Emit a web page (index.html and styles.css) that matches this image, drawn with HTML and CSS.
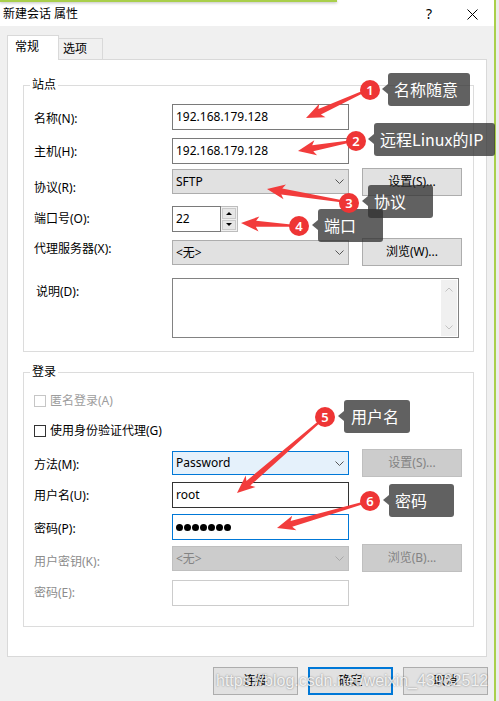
FILE: index.html
```html
<!DOCTYPE html>
<html lang="zh-CN">
<head>
<meta charset="utf-8">
<title>新建会话 属性</title>
<link rel="stylesheet" href="styles.css">
</head>
<body>
<div class="screen">
  <div class="dialog">
    <div class="titlebar">
      <span class="title">新建会话 属性</span>
      <span class="help">?</span>
      <svg class="close" width="11" height="11" viewBox="0 0 11 11"><path d="M0.5 0.5 L10.5 10.5 M10.5 0.5 L0.5 10.5" stroke="#000" stroke-width="1" fill="none"/></svg>
    </div>

    <div class="tabs">
      <div class="tab active">常规</div>
      <div class="tab">选项</div>
    </div>

    <div class="panel">
      <div class="group site">
        <div class="group-title">站点</div>

        <div class="row mt11">
          <span class="lbl t7">名称(N):</span>
          <div class="field">192.168.179.128</div>
        </div>
        <div class="row mt8">
          <span class="lbl t6">主机(H):</span>
          <div class="field">192.168.179.128</div>
        </div>
        <div class="row mt4">
          <span class="lbl t12">协议(R):</span>
          <div class="select mt1">SFTP<svg class="chev" width="9" height="5" viewBox="0 0 9 5"><path d="M0.5 0.5 L4.5 4.5 L8.5 0.5" fill="none" stroke="#555" stroke-width="1"/></svg></div>
          <button class="btn">设置(S)...</button>
        </div>
        <div class="row mt10">
          <span class="lbl t5">端口号(O):</span>
          <div class="spin">
            <div class="spin-input">22</div>
            <div class="spin-btns"><span class="spin-b up"></span><span class="spin-b down"></span></div>
          </div>
        </div>
        <div class="row mt6">
          <span class="lbl t3">代理服务器(X):</span>
          <div class="select mt2">&lt;无&gt;<svg class="chev" width="9" height="5" viewBox="0 0 9 5"><path d="M0.5 0.5 L4.5 4.5 L8.5 0.5" fill="none" stroke="#555" stroke-width="1"/></svg></div>
          <button class="btn">浏览(W)...</button>
        </div>
        <div class="row mt12">
          <span class="lbl t6 ml2">说明(D):</span>
          <div class="memo">
            <div class="memo-bar">
              <svg width="8" height="5" viewBox="0 0 8 5"><path d="M0.5 4.5 L4 1 L7.5 4.5" fill="none" stroke="#c2c2c2" stroke-width="1"/></svg>
              <svg width="8" height="5" viewBox="0 0 8 5"><path d="M0.5 0.5 L4 4 L7.5 0.5" fill="none" stroke="#c2c2c2" stroke-width="1"/></svg>
            </div>
          </div>
        </div>
      </div>

      <div class="group login">
        <div class="group-title">登录</div>

        <div class="check disabled mt13"><span class="box"></span>匿名登录(A)</div>
        <div class="check mt14"><span class="box"></span>使用身份验证代理(G)</div>

        <div class="row mt10">
          <span class="lbl t8">方法(M):</span>
          <div class="select active-sel mt2">Password<svg class="chev" width="9" height="5" viewBox="0 0 9 5"><path d="M0.5 0.5 L4.5 4.5 L8.5 0.5" fill="none" stroke="#555" stroke-width="1"/></svg></div>
          <button class="btn disabled">设置(S)...</button>
        </div>
        <div class="row mt5">
          <span class="lbl t6">用户名(U):</span>
          <div class="field hover">root</div>
        </div>
        <div class="row mt6">
          <span class="lbl t7">密码(P):</span>
          <div class="field focus"><span class="dots"><i></i><i></i><i></i><i></i><i></i><i></i><i></i></span></div>
        </div>
        <div class="row mt4">
          <span class="lbl t10 dim">用户密钥(K):</span>
          <div class="select disabled mt2">&lt;无&gt;<svg class="chev" width="9" height="5" viewBox="0 0 9 5"><path d="M0.5 0.5 L4.5 4.5 L8.5 0.5" fill="none" stroke="#a8a8a8" stroke-width="1"/></svg></div>
          <button class="btn disabled">浏览(B)...</button>
        </div>
        <div class="row mt8">
          <span class="lbl t5 dim">密码(E):</span>
          <div class="field disabled"></div>
        </div>
      </div>
    </div>

    <div class="footer">
      <button class="fbtn">连接</button>
      <button class="fbtn default">确定</button>
      <button class="fbtn">取消</button>
    </div>
  </div>
  <div class="edge"></div>
  <div class="outside"></div>

  <div class="topline"></div>
  <div class="watermark">https://blog.csdn.net/weixin_43932512</div>

  <div class="annot">
    <svg class="arrows" width="499" height="701" viewBox="0 0 499 701">
      <g fill="#f23c3c">
        <polygon transform="translate(306 118) rotate(-24.6)" points="0,0 18,-7.5 15,-3 61,-1.2 61,1.2 15,3 18,7.5"/>
        <polygon transform="translate(298 151) rotate(-10.4)" points="0,0 18,-7.5 15,-3 52,-1.2 52,1.2 15,3 18,7.5"/>
        <polygon transform="translate(267 189) rotate(9.35)" points="0,0 18,-7.5 15,-3 75,-1.2 75,1.2 15,3 18,7.5"/>
        <polygon transform="translate(241 223) rotate(3)" points="0,0 18,-7.5 15,-3 50,-1.2 50,1.2 15,3 18,7.5"/>
        <polygon transform="translate(237 493) rotate(-40.8)" points="0,0 18,-7.5 15,-3 108,-1.2 108,1.2 15,3 18,7.5"/>
        <polygon transform="translate(277 528) rotate(-16.2)" points="0,0 18,-7.5 15,-3 89,-1.2 89,1.2 15,3 18,7.5"/>
      </g>
    </svg>
    <div class="callout c1">名称随意</div>
    <div class="callout c2">远程Linux的IP</div>
    <div class="callout c3">协议</div>
    <div class="callout c4">端口</div>
    <div class="callout c5">用户名</div>
    <div class="callout c6">密码</div>
    <div class="badge b1">1</div>
    <div class="badge b2">2</div>
    <div class="badge b3">3</div>
    <div class="badge b4">4</div>
    <div class="badge b5">5</div>
    <div class="badge b6">6</div>
  </div>
</div>
</body>
</html>
```

FILE: styles.css
```css
* { box-sizing: border-box; }
html, body { margin: 0; padding: 0; }
body {
  width: 499px; height: 701px; overflow: hidden;
  background: #f0f0f0;
  font-family: "Noto Sans", "Noto Sans CJK SC", sans-serif;
  font-size: 12px; line-height: 16px; color: #000;
}
.screen { position: relative; display: flex; width: 499px; height: 701px; }
.dialog { width: 494px; flex: none; display: flex; flex-direction: column; background: #f0f0f0; }
.edge { width: 2px; flex: none; background: #a9cf4b; }
.outside { flex: 1; background: #ececec; }
.topline {
  position: absolute; z-index: 5; left: 0; top: 0; width: 337px; height: 2px;
  background: #a9cf4b; box-shadow: 0 1px 3px rgba(0,0,0,.3);
}

/* title bar */
.titlebar {
  height: 26px; flex: none; background: #fff;
  display: flex; align-items: center; padding: 2px 16px 0 3px;
}
.title { flex: 1; }
.help { font-size: 14px; margin-right: 35px; }
.close { display: block; }

/* tabs */
.tabs {
  position: relative; z-index: 2;
  display: flex; align-items: flex-end;
  height: 25px; margin: 9px 0 0 7px;
}
.tab {
  width: 44px; height: 21px; margin-bottom: 1px;
  padding: 2px 0 0 4px;
  background: #f0f0f0;
  border: 1px solid #d9d9d9; border-left: none; border-bottom: none;
}
.tab.active {
  width: 52px; height: 25px; margin-bottom: 0;
  padding: 3px 0 0 7px;
  background: #fff; border-left: 1px solid #d9d9d9;
}

/* panel */
.panel {
  position: relative; z-index: 1;
  margin: -1px 0 0 7px; width: 480px; height: 598px;
  background: #fff; border: 1px solid #d9d9d9;
  padding: 25px 0 0 15px;
}
.group { width: 451px; border: 1px solid #dcdcdc; padding: 0 0 0 10px; }
.group.site { height: 267px; }
.group.login { height: 255px; margin-top: 20px; }
.group-title {
  width: max-content; margin: -9px 0 0 -4px; padding: 0 2px;
  background: #fff; line-height: 16px;
}

/* rows */
.row {
  display: grid;
  grid-template-columns: 125px 177px 100px;
  column-gap: 13px;
  align-items: start;
}
.lbl { display: block; white-space: nowrap; line-height: 16px; }
.lbl.dim { color: #8c8c8c; }
.ml2 { margin-left: 2px; }

.mt1 { margin-top: 1px; } .mt2 { margin-top: 2px; } .mt4 { margin-top: 4px; }
.mt5 { margin-top: 5px; } .mt6 { margin-top: 6px; } .mt8 { margin-top: 8px; }
.mt10 { margin-top: 10px; } .mt11 { margin-top: 11px; } .mt12 { margin-top: 12px; }
.mt13 { margin-top: 13px; } .mt14 { margin-top: 14px; }
.t3 { margin-top: 3px; } .t5 { margin-top: 5px; } .t6 { margin-top: 6px; }
.t7 { margin-top: 7px; } .t8 { margin-top: 8px; } .t10 { margin-top: 10px; }
.t12 { margin-top: 12px; }

.field {
  height: 26px; border: 1px solid #7a7a7a; background: #fff;
  display: flex; align-items: center; padding: 0 3px;
}
.field.hover { border-color: #333; }
.field.focus { border-color: #0078d7; }
.field.disabled { border-color: #cccccc; }

.dots { display: flex; gap: 1px; }
.dots i { display: block; width: 7px; height: 7px; border-radius: 50%; background: #000; }

.select {
  height: 25px; border: 1px solid #adadad; background: #e1e1e1;
  display: flex; align-items: center; justify-content: space-between;
  padding: 0 4px 0 3px;
}
.select.active-sel { height: 24px; background: #e5f1fb; border-color: #0078d7; }
.select.disabled { background: #cccccc; border-color: #bfbfbf; color: #838383; }
.chev { display: block; }

.btn {
  width: 100px; height: 28px; padding: 0;
  background: #e1e1e1; border: 1px solid #adadad;
  font: inherit; color: #000;
}
.btn.disabled { background: #cccccc; border-color: #bfbfbf; color: #838383; }

/* spinner */
.spin { display: flex; height: 26px; }
.spin-input {
  width: 49px; height: 26px; border: 1px solid #7a7a7a; background: #fff;
  display: flex; align-items: center; padding: 0 3px;
}
.spin-btns {
  width: 17px; height: 26px; border: 1px solid #bdbdbd; border-left: none;
  background: #f0f0f0; padding: 1px;
  display: flex; flex-direction: column; gap: 1px;
}
.spin-b {
  flex: 1; background: #e6e6e6; border: 1px solid #cacaca;
  display: flex; align-items: center; justify-content: center;
}
.spin-b::after { content: ""; display: block; border-left: 3px solid transparent; border-right: 3px solid transparent; }
.spin-b.up::after { border-bottom: 3px solid #000; }
.spin-b.down::after { border-top: 3px solid #000; }

/* memo */
.memo {
  grid-column: 2 / 4; width: 287px; height: 60px;
  border: 1px solid #828282; background: #fff;
  display: flex; justify-content: flex-end; padding: 1px;
}
.memo-bar {
  width: 16px; background: #f0f0f0;
  display: flex; flex-direction: column; justify-content: space-between; align-items: center;
  padding: 7px 0 6px;
}
.memo-bar svg { display: block; }

/* checkboxes */
.check { display: flex; align-items: center; gap: 4px; height: 16px; }
.box { width: 12px; height: 12px; border: 1px solid #333; background: #fff; flex: none; }
.check.disabled { color: #9d9d9d; }
.check.disabled .box { border-color: #c6c6c6; }

/* footer */
.footer {
  display: flex; justify-content: flex-end; gap: 10px;
  margin-top: 10px; padding-right: 6px;
}
.fbtn {
  width: 85px; height: 28px; padding: 0;
  background: #e1e1e1; border: 1px solid #adadad;
  font: inherit; color: #000;
}
.fbtn.default { border: 2px solid #0078d7; }

/* watermark */
.watermark {
  position: absolute; z-index: 5; left: 216px; top: 671px;
  font-family: "Liberation Sans", Arial, sans-serif;
  font-size: 16px; line-height: 20px; white-space: nowrap;
  color: rgba(255,255,255,.85);
  text-shadow: 0 0 2px rgba(0,0,0,.45);
  pointer-events: none;
}

/* annotations */
.annot { position: absolute; z-index: 10; left: 0; top: 0; width: 499px; height: 701px; pointer-events: none; }
.arrows { position: absolute; left: 0; top: 0; }
.callout {
  position: absolute; height: 33px;
  background: rgba(49,49,49,.77); color: #fff;
  border-radius: 3px;
  font-family: "Noto Sans CJK SC", "Noto Sans", sans-serif;
  font-size: 16px; line-height: 33px;
  padding-left: 6px; white-space: nowrap;
}
.callout::before {
  content: ""; position: absolute; left: -6px; top: 11px;
  border-top: 5px solid transparent; border-bottom: 5px solid transparent;
  border-right: 6px solid rgba(49,49,49,.77);
}
.c1 { left: 388px; top: 73px; width: 82px; }
.c2 { left: 374px; top: 123px; width: 121px; }
.c3 { left: 368px; top: 185px; width: 65px; }
.c4 { left: 318px; top: 209px; width: 65px; }
.c5 { left: 344px; top: 400px; width: 66px; padding-left: 7px; }
.c6 { left: 389px; top: 484px; width: 65px; }

.badge {
  position: absolute; width: 20px; height: 20px; border-radius: 50%;
  background: #ee3535; color: #fff;
  font-family: "Noto Sans", sans-serif; font-size: 13px; font-weight: 600;
  display: flex; align-items: center; justify-content: center;
}
.b1 { left: 360px; top: 80px; }
.b2 { left: 346px; top: 131px; }
.b3 { left: 339px; top: 193px; }
.b4 { left: 289px; top: 216px; }
.b5 { left: 315px; top: 407px; }
.b6 { left: 360px; top: 491px; }
```
